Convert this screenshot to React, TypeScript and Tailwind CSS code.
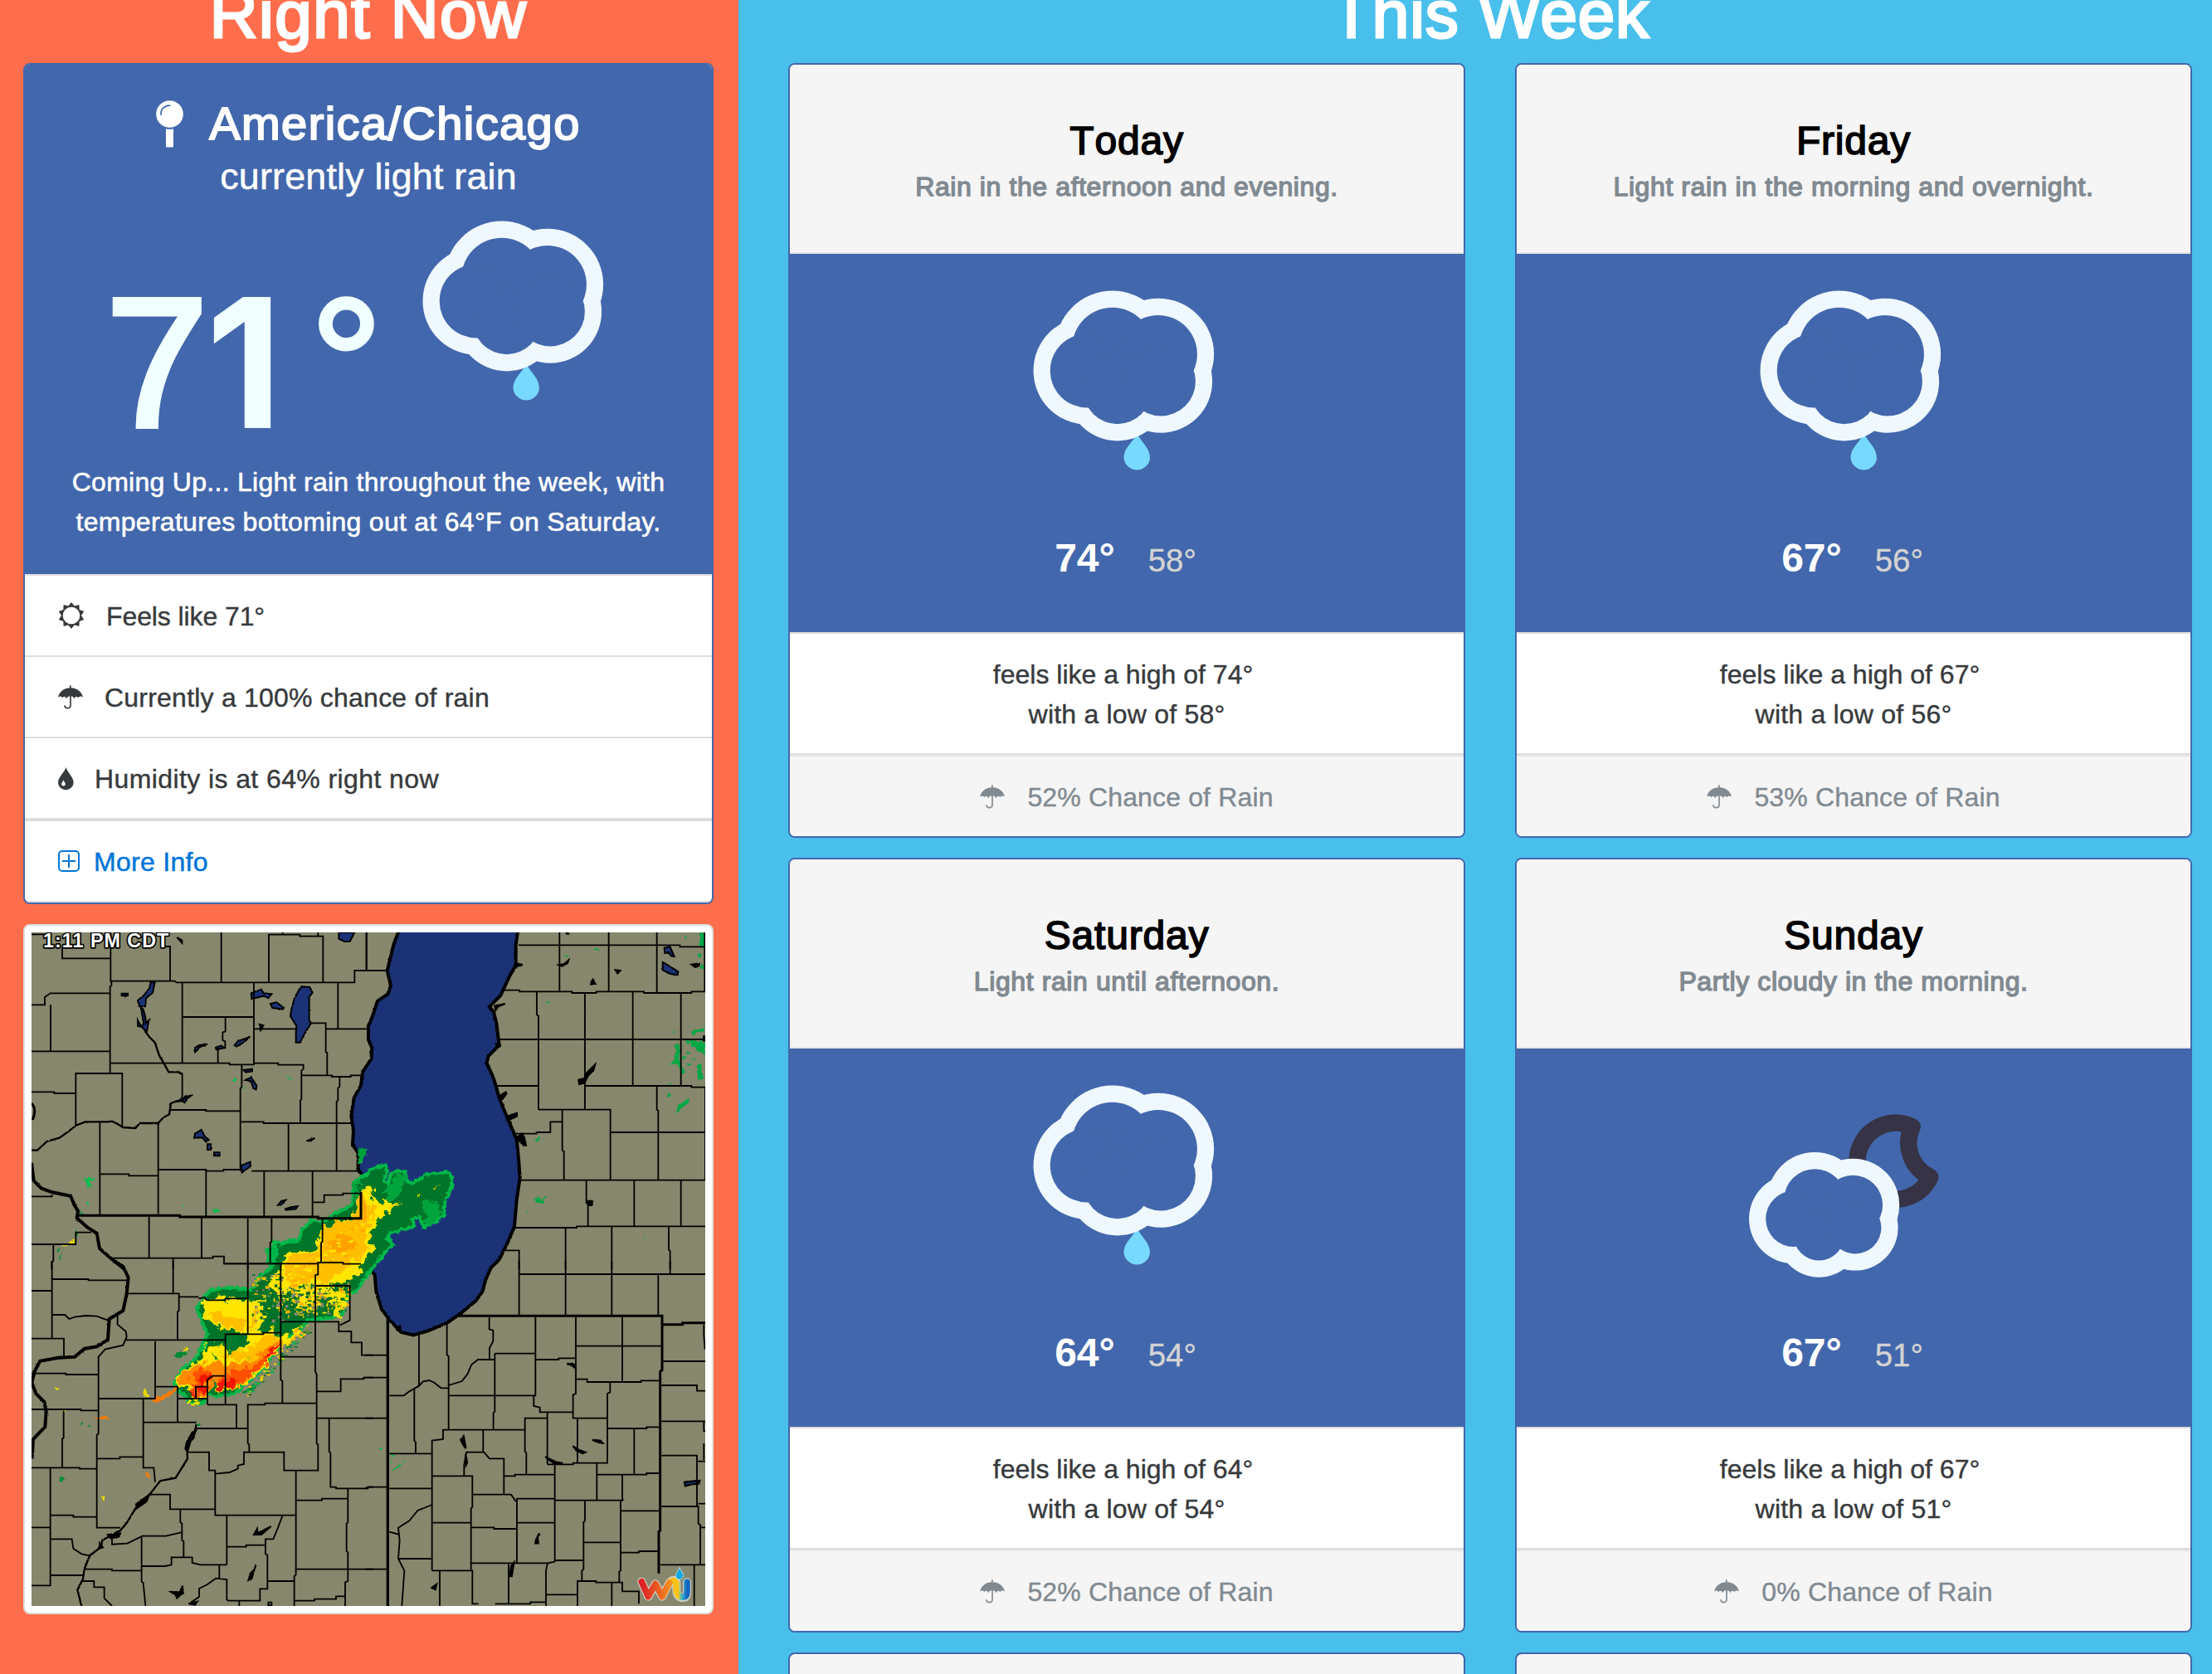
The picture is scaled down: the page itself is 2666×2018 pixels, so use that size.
import React from "react";

const CLOUD = [
  [95.2, 68.8, 68.8],
  [150.4, 76.4, 67.2],
  [64.8, 96.4, 64.8],
  [101.2, 119.9, 61],
  [153.6, 109.2, 62],
];

function Puffs({ x, y, k }: { x: number; y: number; k: number }) {
  return (
    <g transform={`translate(${x} ${y})`}>
      <g fill="#f0f8ff">
        {CLOUD.map(([cx, cy, r], i) => (
          <circle key={i} cx={cx * k} cy={cy * k} r={r * k} />
        ))}
      </g>
      <g fill="#4267ac">
        {CLOUD.map(([cx, cy, r], i) => (
          <circle key={i} cx={cx * k} cy={cy * k} r={r * k - 20.2} />
        ))}
      </g>
    </g>
  );
}

function RainCloud() {
  return (
    <svg viewBox="0 0 256 256" className="h-64 w-64 shrink-0">
      <path d="M140.500 192C144 202 156 209 156 222A15.800 15.800 0 0 1 124.500 222C124.500 209 137 202 140.500 192Z" fill="#78d9ff" />
      <Puffs x={15.5} y={20.5} k={1} />
    </svg>
  );
}

function CloudyNight() {
  return (
    <svg viewBox="0 0 256 256" className="h-64 w-64 shrink-0">
      <path
        transform="translate(-56 -48) scale(.333333)"
        d="M764 355A138 138 0 1 0 829 537A137 137 0 0 1 764 355Z"
        fill="none"
        stroke="#353345"
        strokeWidth="61"
        strokeLinejoin="round"
      />
      <Puffs x={2} y={101} k={0.833} />
    </svg>
  );
}

function Umbrella() {
  return (
    <svg viewBox="30 318 90 86" className="h-[29px] w-[30px] shrink-0" fill="currentColor">
      <path d="M72 318h5v9C100 328 116 342 120 361C114 357 107 357 103 363C98 357 93 357 89 366C86 360 82 357 77.500 357V390C77.500 399 72 403 65 403C57 403 51 398 51 390H56C56 395 60 398 65 398C70 398 72.500 395 72.500 390V357C68 357 63 360 60 366C56 357 51 357 46 363C42 357 36 357 30 361C34 342 50 328 72 327Z" />
    </svg>
  );
}

function Sun() {
  const pts: string[] = [];
  for (let i = 0; i < 20; i++) {
    const r = i % 2 ? 36 : 48;
    const a = (i * Math.PI) / 10;
    pts.push(`${50 + r * Math.sin(a)},${50 - r * Math.cos(a)}`);
  }
  return (
    <svg viewBox="2 2 96 96" className="h-8 w-8 shrink-0">
      <polygon points={pts.join(" ")} fill="#373a3c" />
      <circle cx="50" cy="50" r="31" fill="#fff" />
    </svg>
  );
}

function Drop() {
  return (
    <svg viewBox="30 610 56 80" className="h-[27px] w-[19px] shrink-0">
      <path d="M58 610C63 628 85 645 85 664A27 26 0 0 1 30 664C30 645 53 628 58 610Z" fill="#373a3c" />
      <path d="M49 655C51 661 56 665 56 670A7 7 0 0 1 42 670C42 665 47 661 49 655Z" fill="#fff" />
    </svg>
  );
}

function Plus() {
  return (
    <svg viewBox="0 0 26 26" className="h-[26px] w-[26px] shrink-0" fill="none" stroke="#0275d8" strokeWidth="2">
      <rect x="1" y="1" width="24" height="24" rx="4" />
      <path d="M13 5V21M5 13H21" />
    </svg>
  );
}

function Pin() {
  return (
    <svg viewBox="24 29 99 170" className="h-[57px] w-[33px] shrink-0">
      <circle cx="73.500" cy="78" r="49" fill="#fff" />
      <path d="M60 131Q73 134 87 131V194Q87 198 83 198H64Q60 198 60 194Z" fill="#fff" />
      <path d="M42 82Q40 49 76 47" fill="none" stroke="#4267ac" strokeWidth="5" />
    </svg>
  );
}

const RADAR_EDGE =
  "M1305-340L1335-345L1338-322L1328-290L1345-280L1350-310L1370-325L1390-326L1405-320L1408-295L1425-280L1445-290L1490-315L1530-318L1560-322L1575-300L1575-275L1560-240L1550-220L1545-165L1520-145L1470-122L1462-145L1455-160L1432-150L1438-130L1425-120L1380-110L1350-100L1340-80L1362-62L1335-35L1320-15L1300 10L1285 30L1250 75L1230 110L1200 120L1180 190L1150 205L1050 215L1030 250L980 280L950 310L920 350L880 400L820 450L790 480L720 490L690 480L680 510L650 518L620 508L615 490L580 470L572 440L600 390L650 350L670 300L690 265L670 220L650 170L680 130L700 105L780 95L850 105L880 55L920 25L915-10L905-40L935-50L930-70L960-60L985-75L1020-70L1030-110L1050-130L1070-150L1100-140L1150-170L1210-200L1220-280L1240-300L1270-315L1280-330Z";

function rand(seed: number) {
  let s = seed;
  return () => {
    s = (s * 16807) % 2147483647;
    return s / 2147483647;
  };
}

function Specks() {
  const r = rand(77);
  const out = [];
  for (let i = 0; i < 420; i++) {
    const t = r();
    const x = 850 + t * 350;
    const y = 215 - (t > 0.35 ? t * 40 : 0) - r() * (t > 0.3 ? 110 : 170);
    const w = 5 + Math.floor(r() * 3) * 5;
    const h = 5 + Math.floor(r() * 2) * 5;
    const c = ["#00702a", "#006626", "#86876c", "#ffe600", "#00702a", "#ffb400"][Math.floor(r() * 6)];
    out.push(<rect key={i} x={x} y={y} width={w} height={h} fill={c} />);
  }
  for (let i = 0; i < 110; i++) {
    const t = r();
    out.push(
      <rect
        key={"b" + i}
        x={830 + t * 230}
        y={460 - t * 220 + r() * 34 - t * 20}
        width={5 + r() * 9}
        height={5}
        fill={["#00b848", "#00702a", "#86876c", "#ffd000"][i % 4]}
      />
    );
  }
  for (let i = 0; i < 90; i++) {
    const a = r();
    out.push(
      <rect
        key={"c" + i}
        x={975 + a * 270}
        y={60 - a * 200 + (r() - 0.3) * 90}
        width={5 + r() * 14}
        height={5 + r() * 5}
        fill={["#ffc800", "#ffa800", "#ffe600"][i % 3]}
      />
    );
  }
  return <g>{out}</g>;
}

function RadarMap() {
  return (
    <svg viewBox="0 0 2436 2436" className="block h-[812px] w-[812px]">
      <defs>
        <filter id="rough" x="-5%" y="-5%" width="110%" height="110%">
          <feTurbulence type="fractalNoise" baseFrequency="0.07" numOctaves="3" seed="4" result="n" />
          <feDisplacementMap in="SourceGraphic" in2="n" scale="18" xChannelSelector="R" yChannelSelector="G" />
        </filter>
        <filter id="blotch" x="-5%" y="-5%" width="110%" height="110%">
          <feTurbulence type="fractalNoise" baseFrequency="0.035" numOctaves="4" seed="12" result="n" />
          <feDisplacementMap in="SourceGraphic" in2="n" scale="60" xChannelSelector="R" yChannelSelector="G" />
        </filter>
        <filter id="coast" x="-5%" y="-5%" width="110%" height="110%">
          <feTurbulence type="fractalNoise" baseFrequency="0.09" numOctaves="2" seed="9" result="n" />
          <feDisplacementMap in="SourceGraphic" in2="n" scale="6" xChannelSelector="R" yChannelSelector="G" />
        </filter>
        <linearGradient id="w" x1="0" x2="1">
          <stop offset="0" stopColor="#dc1f26" />
          <stop offset="1" stopColor="#f58a1f" />
        </linearGradient>
        <linearGradient id="u" x1="0" x2="1">
          <stop offset="0" stopColor="#fdb913" />
          <stop offset=".5" stopColor="#fdc516" />
          <stop offset=".7" stopColor="#3bb6c9" />
          <stop offset="1" stopColor="#1565c0" />
        </linearGradient>
      </defs>
      <rect width="2436" height="2436" fill="#86876c" />

      {/* Lake Michigan */}
      <g transform="translate(1206 -72)" filter="url(#coast)">
        <path
          d="M125 60L105 110L95 150L80 210L93 265L82 295L45 320L25 380L12 410L12 460L25 490L22 530L-8 575L-15 625L-40 670L-50 735L-42 790L-45 840L-25 870L-25 930L2 965L-10 1010L-14 1110L-25 1170L-20 1230L5 1280L35 1310L40 1370L60 1435L90 1475L130 1518L175 1528L230 1512L300 1482L345 1450L400 1405L425 1370L435 1330L455 1285L485 1255L515 1195L540 1135L548 1040L560 960L555 890L548 820L515 745L485 670L465 600L440 545L445 520L485 480L475 400L465 360L450 340L490 300L520 235L545 190L545 120L553 60Z"
          fill="#1a3276"
          stroke="#000"
          strokeWidth="12"
        />
        <path d="M540 180l30 5v8l-32 10zM485 660l25-15 5 10-15 22-15 3zM510 735l42-14v18l-30 15zM548 810l20-15 10 15 8 35h-14l-20-20zM470 470l22 5v12h-20zM465 335l40-8 3 6-25 10-12 18z" />
      </g>

      {/* inland lakes */}
      <g transform="translate(-54 -72)" fill="#1a3276" stroke="#000" strokeWidth="6" filter="url(#coast)">
        <path d="M1028 268L1060 270L1070 290L1058 305L1058 390L1065 400L1040 440L1025 470H1010V430L1012 410L990 375L995 345L1005 310Z" />
        <path d="M485 252H500L492 290L468 310L465 340H445L438 318L460 300L480 275Z" />
        <path d="M458 350L466 380L468 400L478 390L470 435L455 415L438 410V390L450 410L460 405L450 345Z" />
        <path d="M848 292L885 278L892 292L922 295L910 310L895 302L850 312ZM918 330L940 325L966 345L962 350L925 345Z" />
        <path d="M1165 72H1222L1205 105H1185L1165 95ZM645 800L668 786L682 812L695 822L685 830L672 814L642 815ZM690 838h12v20h-12zM714 868h20v12h-20zM812 915L845 902V918L815 940ZM720 488l20-6 12 8-30 6z" />
        <path d="M788 480L800 465L845 450L820 470L795 485ZM380 293h22v8h-22zM820 570l32-4v8l-24 4zM828 606l20-10 20 30-2 14-10-4-8-26zM575 683l25-5 10-14 22-2-18 14-6 12-8-6-24 2zM945 1058l12-14 15-4-14 18zM972 1072l20-6 24-4-6 10-36 4zM1112 1138l22-6-10 18-12-2zM1048 826l30-10-14 10zM580 90l18 10v10zM645 505V490L660 480L690 476L660 488L652 500ZM880 405l12 4-10 16z" />
      </g>
      <g transform="translate(1206 -72)" fill="#1a3276" stroke="#000" strokeWidth="6" filter="url(#coast)">
        <path d="M1082 128l20-5 16 36-12-2-8-14-14 4zM1076 180l12 6 44 28-2 12-26-4-28-14z" />
        <path fill="#000" d="M1180 188l28-4v8l-14 6zM905 208l18 2-10 10zM818 250l6-8 8 16-16 2zM700 190l20-4 16-14-4 12-20 10zM772 605l22-6 8-20 30-30-6 22-20 20-12 26-20 4zM805 1043h16v16h-14zM728 72h8v5h-8z" />
      </g>
      <g transform="translate(1206 1188)" fill="#1a3276" stroke="#000" strokeWidth="7" filter="url(#coast)">
        <path d="M1155 800L1190 796L1210 795L1206 806L1180 808L1158 814ZM652 708L670 718L690 728L715 732L685 734L660 716ZM752 670L770 682L796 692L786 696L764 686ZM730 372l26 2 4 14-14-12z" />
        <path fill="#000" d="M822 648l28 2 8 8-14-2zM356 634l4 20 4 24-12-18-6-14zM363 700l6 30-4 8zM630 985l-6 14 2 22h-10l2-12zM538 1092l-8 48h-6l4-36zM242 1182l16-12-4 18zM115 240l12-4v18l-12-6z" />
      </g>
      <g transform="translate(-54 1188)" stroke="#000" strokeWidth="6" filter="url(#coast)">
        <path d="M648 615L630 650L618 690L610 680L615 655L635 620ZM330 990L375 985L370 998L340 1003ZM300 1020l12 16-14 4zM432 880L480 845L470 870L435 895ZM858 990L870 968L872 985L920 960L885 990ZM865 1100L850 1150L838 1155L845 1130L860 1115ZM558 1197L590 1198L600 1175L602 1200L580 1220L575 1208ZM622 1240l30-8-6 12z" />
      </g>

      {/* precipitation */}
      <g transform="translate(-54 1188)" filter="url(#rough)">
        <path d={RADAR_EDGE} fill="#00752c" stroke="#00b848" strokeWidth="12" />
        <path d="M910-30L950-50L930 20L900 10ZM660 320L690 280L690 310L650 345Z" fill="#00b848" />
      </g>
      <g transform="translate(-54 1188)" filter="url(#blotch)">
        <path d="M1330-250L1370-310L1400-305L1400-270L1370-220L1340-210ZM1480-220L1530-210L1540-170L1490-135L1470-140L1480-190ZM1220-280L1240-300L1235-220L1215-200Z" fill="#00a43e" />
        <path d="M1255-270L1290-275L1280-230L1330-210L1378-210L1335-170L1300-140L1275-100L1295-40L1265 0L1240 40L1190 80L1110 90L1190 110L1170 200L1150 200L1140 150L1090 110L1080 200L1050 160L1030 200L990 110L960 160L940 120L900 80L935 60L960 20L975-25L1080-50L1105-120L1210-155L1240-220Z" fill="#ffe600" />
        <path d="M660 150L700 135L835 140L880 150L900 190L870 260L930 250L955 280L1040 235L1010 280L960 310L920 360L880 400L820 450L760 480L720 460L690 490L650 510L625 505L640 480L590 450L575 440L600 385L650 370L690 310L740 290L770 340L840 300L830 265L740 240L680 215Z" fill="#ffe600" />
        <path d="M760 270L810 270L790 320L760 345ZM800 350l30-8v16zM700 345l30-4-6 18zM700 440l36-10-10 50-20 4z" fill="#007a2e" />
        <path d="M1250-240L1300-190L1270-120L1265-40L1230 0L1120 75L1060 70L980 100L970 20L1000-20L1090-40L1110-120L1210-150ZM690 200L730 190L830 230L820 250L740 230ZM850 180L880 175L860 250L845 250ZM980 290L1040 240L1030 270L985 300ZM890 270L940 262L950 290L860 350L790 360L730 340L850 320Z" fill="#ffbe00" />
        <path d="M1130-70L1190-110L1225-60L1180-20L1140-30ZM1255-220L1275-180L1260-130L1250-160Z" fill="#ffa200" />
        <path d="M585 440L600 395L650 380L720 365L790 375L860 350L920 300L955 285L960 305L910 360L850 415L790 460L735 455L720 430L690 490L640 495L640 455Z" fill="#ff8a00" />
        <path d="M620 445L645 420L665 385L690 400L700 420L685 480L645 490L645 460ZM735 420L790 400L860 375L925 310L960 290L920 345L890 375L800 455L760 470L735 458Z" fill="#ff5000" />
        <path d="M735 440L760 425L795 430L790 455L760 470L735 463ZM900 345L925 315L950 298L950 310L915 345L905 370ZM655 430L690 405L690 475L660 475ZM635 475h14v18h-14z" fill="#f01400" />
      </g>
      <g transform="translate(-54 1188)" filter="url(#rough)">
        <path d="M490 500L520 490L560 470L575 450L580 470L550 492L520 508L495 512ZM280 566L310 562L340 570L310 575ZM465 768L480 770L484 785L470 780Z" fill="#ff7a00" />
        <path d="M455 480L465 465L480 488L465 492ZM600 325L615 310L620 330ZM308 852h10v12h-10zM162 540h16v6h-16zM140 460h12v8h-12zM625 515L670 508L660 520L635 524ZM1445-238l14-8-8 16zM1505-265l30-12-24 16zM1345-195l40-18-30 28zM160-55l30-12 22-14-6 16-30 14z" fill="#e8d800" />
        <path d="M565 345L585 330L620 330L632 325L610 342L575 352ZM155 785l14-6 4 16-18 2zM258 592l12 14-10-2zM232 586h8v6h-8zM650 588h12v6h-12zM820 470l80-50-40 46-38 16zM225-185l16 10-6 14zM215-130l4 40-6 8zM150-40l8-8-8 28zM155 0l14-50-10 30-8 12z" fill="#008a34" />
        <path d="M240-300h45v10h-22l10 20-16 8-4-22zM255-212h8v8h-8zM598-200l12-2-6 8zM675-178h20l-8 10zM706-188l34 4-20 8zM780-655l12-4-4 18zM820-630h6v5h-6zM905-698h10M972-670l10 6 14 2v4l-22-4zM1000-700l14 6z" fill="#00bf4b" />
        <path d="M1238-405l30-2-2 20-12 14-4 18-10 6-4-30z" fill="#00a43e" />
      </g>
      <g transform="translate(-54 1188)">
        <Specks />
      </g>
      <g transform="translate(1206 -72)" fill="#00a844" filter="url(#rough)">
        <path d="M1210 75L1228 72V135L1208 120ZM1172 432L1225 415V428L1190 442ZM1155 462L1230 470V515L1200 500L1185 485ZM1118 480L1135 475L1138 500L1132 530L1156 575L1145 585L1132 550L1100 552L1120 530L1126 500ZM1200 548L1215 545L1222 600L1208 605ZM1105 436l12-6 8 8zM1095 618h14v5h-14zM1125 728L1130 700L1165 675L1172 685L1140 712ZM1090 655h14v10h-14zM825 133h24v4h-24zM722 155h12v5h-12zM655 322h20l-14 8zM610 1035l20-6 6 16 24-26-14 28-24 4zM580 1078h12v5h-12zM612 828l20-18-6 14zM1008 1172h10v5h-10zM1212 190h14v14h-14zM1155 86h8v8h-8zM1160 560l16-20 4 8zM1150 520h10v8h-10zM1165 505h12v6h-12zM1185 530h8v8h-8zM1206 150h8v10h-8z" />
      </g>
      <g transform="translate(1206 1188)" fill="#00b848">
        <path d="M50 680l14-6-4 10zM95 702h10v5h-10zM92 725h6v5h-6zM98 758l30-24 4 4-30 22zM136 724h6v5h-6z" />
      </g>

      {/* county and state borders */}
      <g fill="none" stroke="#000" strokeWidth="5.5">
        <g transform="translate(-54 -72)">
          <path d="M54 79H100M165 125V166H338M340 72V248H572L578 253H1222V210H1290M343 248V265L338 268V582M530 123H555V248M740 72V253M912 253V80H1024V86H1108V253M962 72v8M1090 72v12M1265 72V210M338 292H122L102 306V334H54M123 334V502M54 502H338M599 253V545M599 378H858M858 253V545M755 378V430L745 434V462L754 466V490M728 490V545M338 545H770V550H858V545H946V551H1037V566L1030 572V675L1026 680V762M858 421H1012M1058 400H1118V505L1123 508V589M1162 253V421M1118 421H1270M1030 589H1140V594H1208V589H1250M1168 594V630L1162 635V680L1157 684V935M814 550V632L809 636V935M599 582V670M214 770V582H382V772M54 649H136V654H214M555 690V714H685V718H809M809 757H893V762H1215M983 762V935M512 757V1090M512 930H685V935H748V930H809M850 935H1235M685 935V1100M895 935V1100M1070 935V1098M1070 1048H1112V1022H1180V1016H1240M301 760V1092M301 946H406V952H512" />
          <path d="M54 1027H128V1020M54 1200H214V1157H270M133 1200V1260L127 1264V1290M479 1100V1248M669 1100V1248M836 1105V1290M922 1105V1190L917 1194V1270M345 1250H710V1244H750V1270H960M566 1250V1290M1106 1106V1190L1101 1195V1266M917 1270H1090V1266H1180V1271H1245" />
          <path d="M465 430L480 450L500 470L515 515L535 550L550 577H585L599 584M54 860H75L110 828L155 815L190 790L215 770L248 757H330L345 755L365 765L385 777L430 780L445 762H512L530 742L552 730L558 690L600 675L630 663" strokeWidth="7" filter="url(#coast)" />
          <path d="M54 905L62 970L90 998L130 1012L195 1025L210 1060L222 1080L218 1105L255 1138L290 1160L300 1215L340 1250L390 1290" strokeWidth="12" filter="url(#coast)" />
          <path d="M54 690q20 20 4 60" strokeWidth="9" />
          <path d="M218 1096H590V1101H1090V1106H1245V1010" strokeWidth="9" />
        </g>
        <g transform="translate(1206 -72)">
          <path d="M5 72V210M-35 210H80M555 118H1138V124H1228V286M703 72V286M881 72V286M1055 72V291M1228 72V124M500 281H558V286H748V291H836V286H1008V291H1180V286H1230M621 286V370L627 374V713M795 291V713M968 286V627M1142 291V627M485 459H1230M473 627H627M795 627H1180V632H1230V968M627 713H887V968M713 713V860L719 864V968M713 757H670V795H620V800H545M1055 627V713L1060 716V968M887 795H1228M562 968H1230M800 968V1050L806 1054V1135M973 968V1135M1142 968V1135M540 1140H765V1135H1230M725 1140V1290M892 1135V1290M1098 1135V1220L1103 1224V1290M505 1222H557V1290" />
          <path d="M1230 445v22" strokeWidth="18" />
        </g>
        <g transform="translate(-54 1188)">
          <path d="M128 0V281M128 66H260V70H398M54 108H128M128 195H175L190 210L210 203L250 198L290 200L330 215M54 281H171V347M400 118H587V130H658M587 130V180L582 184V286M390 286H755M566 0V118M658 136L680 132L688 142H755V136H836M836 0V265M750 10H955M755 265H892V260H955M755 265V518M690 520H795V606M648 606H836M365 190V230L395 255L398 275L385 305L320 320L296 347V625L290 630V712V965H375M54 407H178V411H296M54 537H232V541H293M170 541V640L165 644V748M54 748H228V752H290M290 715H373V709H458M501 290V498H296M501 455H582V583M458 498V748H496L501 800M458 584H650M582 498H690V520M836 606V520H898V515H1085M836 606V660L841 664V692M955 10V430L961 434V515M955 220H1165V255H1210V295H1248V341H1290M1080 50V400L1085 410V660L1090 665V758H967V692H822V735L800 740V752L770 765L718 770M1090 10V50H1080M1080 90H1205V215L1170 232M955 347H1080M1085 472H1172V427H1255V422H1290M1085 569H1290M1130 569V690L1135 694V818H1155V823H1270V818H1290M690 520V430L708 416H755M690 455H648V495" />
          <path d="M620 692H696V758H718V920H1010M485 845H555V898H718M592 898V945L598 950V1010L604 1014V1072M760 920V1099M760 1034H830V1028H900M962 920L945 965L928 1006H900V1060L907 1064V1158M1010 758V1135L1004 1140V1248M1010 866H1104V860H1198M1198 823V945L1193 950V1050L1198 1054V1158L1188 1162V1248M1010 1115H1290M1004 1158H907V1186H880V1229H765L760 1225V1152L720 1148L690 1170L660 1185V1215L630 1235M733 1099V1150M453 1104H537L560 1099V1072H635V1092L665 1099H760M345 1000V1025L400 1022L455 995H540L595 982M452 1000V1160L458 1164L466 1248M54 964H122M122 748V1174H54M122 920H205V926H290M122 1006H200L205 1040L235 1060L265 1066M245 1115H345V1120H452M122 1137H245M240 1158H280V1180H317V1220L345 1248M1004 1229H1077V1223H1155V1213H1188M805 1229V1248M910 1235h12v10h-12z" />
          <path d="M350 0L385 20L404 60L398 120L385 180L335 210L330 285L290 310L245 318L210 347L150 350L85 362L65 400L55 440L70 480L100 510L107 545L103 600L60 645L56 715" strokeWidth="12" filter="url(#coast)" />
          <path d="M650 590L640 640L615 665L618 715L575 785L520 795L485 840L430 895L400 945L375 975L310 1010L305 1035L265 1065L245 1115L240 1150L220 1190L235 1248" strokeWidth="7" filter="url(#coast)" />
        </g>
        <g transform="translate(1206 1188)">
          <path d="M195 265V450M296 225V340L302 345V611M449 203V247L463 252V290L450 315V356M0 341H80M0 422H80M0 569H80M88 487H140L160 472L195 452L210 436L232 432L250 440L275 460H302M302 450L350 435L370 410L385 375L408 357H469M469 335H616M469 335V545L464 550V611M616 203V487H302M616 357H700V352H762M762 203V480L752 484V569H875M930 203V438M762 308H1070M762 428H803V438H998V433H1065M886 438V475L876 480V731H768V569M610 487V525L632 530V547H752M659 547V736M578 611V569H659M578 569V690L583 694V773M302 611H578M302 611H282V645L242 650V1120M178 460V650L183 655V697M88 697H242M88 823H242M427 611V692M363 692H430L450 715H502V845M358 778V740L366 692M242 778H388V890L383 895V1120M388 845H528L545 870M502 778H542V773H686M549 1092V860H686M686 736V1088M659 736H752V731H768M838 731V866M838 773H1018V768H1065M973 606V773M876 606H1018V601H1065M930 773V866M686 866H930L924 870V1120L919 1124V1163M795 866V940L790 945V1115L784 1120V1158M790 1018H924M924 904H1065M924 1055H990V1050H1062M686 1083H788M383 1093H660L686 1088M383 964H466V969H549M242 947H383M549 947H686" />
          <path d="M242 882L190 903L160 940L120 965L125 1010L120 1077L142 1120L133 1248M120 1077H242M242 1120H388V1240H410M270 1120V1248M519 1093V1240M470 1240H598V1234H654M660 1093L654 1120V1248M654 1207H768M768 1248V1158H835V1163H930V1195H990V1240M892 1163V1248M1078 363H1230M1072 450H1200V470H1230M1072 580H1230M1072 704H1200V888M1072 888H1205V950L1212 955V1099M1068 1099H1230M1190 1099V1248M1200 725H1230M1205 878H1230M1212 964H1230M1225 230V270L1229 320M1225 580V615H1230M1225 660V720M557 0V195M725 0V195M892 0V195M557 48H1230M1103 0V48M1060 48V195M0 823L10 818H80M0 1115H82M88 980L125 990" />
          <path d="M82 210V1248" strokeWidth="10" />
          <path d="M335 199H1074V395L1067 400V975L1062 980V1130M1078 230H1148V224H1230" strokeWidth="9" />
        </g>
      </g>

      {/* Weather Underground mark */}
      <g transform="translate(1206 1188)" fill="none" strokeLinecap="round" strokeLinejoin="round">
        <path d="M1000 1160L1024 1214L1050 1168L1074 1214L1100 1165Q1116 1144 1126 1164V1195Q1130 1218 1150 1218Q1164 1218 1164 1195V1162" stroke="#fff" strokeOpacity=".6" strokeWidth="30" />
        <path d="M1100 1165Q1116 1148 1126 1166V1195Q1130 1216 1150 1216Q1164 1216 1164 1195V1162" stroke="url(#u)" strokeWidth="23" />
        <path d="M1000 1160L1024 1214L1050 1168L1074 1214L1100 1165" stroke="url(#w)" strokeWidth="23" />
        <path d="M1137 1110C1142 1122 1151 1130 1151 1138A14 14 0 0 1 1123 1138C1123 1130 1132 1122 1137 1110Z" fill="#0aa7e0" stroke="#fff" strokeOpacity=".6" strokeWidth="3" />
      </g>

      <text x="42" y="53" fontFamily="Liberation Sans" fontWeight="700" fontSize="70" textLength="454" fill="#fff" stroke="#000" strokeWidth="10" paintOrder="stroke" strokeLinejoin="round">
        1:11 PM CDT
      </text>
    </svg>
  );
}

type Day = { name: string; summary: string; hi: string; lo: string; rain: string; night?: boolean };

const DAYS: Day[] = [
  { name: "Today", summary: "Rain in the afternoon and evening.", hi: "74°", lo: "58°", rain: "52%" },
  { name: "Friday", summary: "Light rain in the morning and overnight.", hi: "67°", lo: "56°", rain: "53%" },
  { name: "Saturday", summary: "Light rain until afternoon.", hi: "64°", lo: "54°", rain: "52%" },
  { name: "Sunday", summary: "Partly cloudy in the morning.", hi: "67°", lo: "51°", rain: "0%", night: true },
];

function DayCard({ d }: { d: Day }) {
  return (
    <article className="flex h-[934px] w-[816px] flex-col overflow-hidden rounded-lg border-2 border-[#4267ac] bg-white text-center">
      <header className="h-[228px] border-b-2 border-[#e5e5e5] bg-[#f5f5f5] pt-[65px]">
        <h4 className="text-[48px] leading-[53px] tracking-[0.8px] text-black [-webkit-text-stroke:1.6px_#000] [font-kerning:none]">{d.name}</h4>
        <p className="mt-[11px] text-[32px] leading-[36px] tracking-[0.6px] text-[#818a91] [-webkit-text-stroke:1.4px_#818a91]">{d.summary}</p>
      </header>
      <div className="flex h-[456px] flex-col items-center bg-[#4267ac] pt-6">
        {d.night ? <CloudyNight /> : <RainCloud />}
        <div className="mr-[3px] mt-[58px] flex items-baseline gap-[40px] leading-[58px]">
          <span className="text-[48px] font-bold text-white">{d.hi}</span>
          <span className="text-[38.4px] text-[#d3d3d3] [-webkit-text-stroke:0.4px_#d3d3d3]">{d.lo}</span>
        </div>
      </div>
      <div className="h-[148px] border-y-2 border-[#ddd] pt-[25px] text-[32px] leading-[48px] text-[#373a3c] [-webkit-text-stroke:0.4px_#373a3c]">
        <p className="pr-[9px]">feels like a high of {d.hi}</p>
        <p className="tracking-[0.2px]">with a low of {d.lo}</p>
      </div>
      <footer className="flex h-[98px] items-center justify-center gap-[27px] border-t-2 border-[#e5e5e5] bg-[#f5f5f5] text-[32px] leading-[48px] text-[#818a91]">
        <Umbrella />
        <span className="mt-[2px] tracking-[0.15px] [-webkit-text-stroke:0.4px_#818a91]">{d.rain} Chance of Rain</span>
      </footer>
    </article>
  );
}

export default function App() {
  return (
    <main className="flex h-[2018px] w-[2666px] overflow-hidden font-['Liberation_Sans',Arial,sans-serif]">
      <section className="w-[890px] shrink-0 bg-[#ff6e4c] pl-7">
        <h1 className="-mt-[26px] mb-[14px] w-[832px] text-center text-[80px] leading-[88px] tracking-[1.5px] text-white [-webkit-text-stroke:3px_#fff]">Right Now</h1>
        <article className="w-[832px] overflow-hidden rounded-lg border-2 border-[#4267ac] bg-white">
          <header className="h-[614px] bg-[#4267ac] pt-10 text-center text-white">
            <h3 className="flex items-center justify-center gap-[31px] text-[56px] leading-[62px] tracking-[1.4px] [-webkit-text-stroke:2px_#fff]">
              <Pin />
              <span>America/Chicago</span>
            </h3>
            <p className="mt-[7px] text-[44.8px] leading-[50px] tracking-[0.2px] [-webkit-text-stroke:0.5px_#fff]">currently light rain</p>
            <div className="flex h-[320px] items-start pl-[98px] pt-[9px]">
              <div className="mt-[79px] flex w-[366px] shrink-0 text-[220px] leading-[226px] text-[#f0ffff] [-webkit-text-stroke:7px_#f0ffff]">
                <span>7</span>
                <span className="font-['Inter'] text-[211px] font-semibold [-webkit-text-stroke:4px_#f0ffff]">1</span>
                <span className="ml-[34px] [-webkit-text-stroke:5px_#f0ffff]">°</span>
              </div>
              <RainCloud />
            </div>
            <p className="text-[32px] leading-[48px] tracking-[0.28px] [-webkit-text-stroke:0.6px_#fff]">
              Coming Up... Light rain throughout the week, with
              <br />
              temperatures bottoming out at 64°F on Saturday.
            </p>
          </header>
          <ul className="text-[32px] leading-[48px] text-[#373a3c]">
            <li className="flex h-[98px] items-center gap-[26px] border-t-2 border-[#ddd] pl-10">
              <Sun />
              <span className="mt-[2px] tracking-[-0.1px] [-webkit-text-stroke:0.4px_#373a3c]">Feels like 71°</span>
            </li>
            <li className="flex h-[98px] items-center gap-[26px] border-t-2 border-[#ddd] pl-10">
              <Umbrella />
              <span className="mt-[2px] tracking-[0.22px] [-webkit-text-stroke:0.4px_#373a3c]">Currently a 100% chance of rain</span>
            </li>
            <li className="flex h-[98px] items-center gap-[25px] border-t-2 border-[#ddd] pl-10">
              <Drop />
              <span className="mt-[2px] tracking-[0.4px] [-webkit-text-stroke:0.4px_#373a3c]">Humidity is at 64% right now</span>
            </li>
            <li className="flex h-[102px] items-center gap-[17px] border-b-2 border-t-4 border-[#ddd] pl-10 text-[#0275d8]">
              <Plus />
              <span className="mt-[2px] tracking-[0.3px] [-webkit-text-stroke:0.5px_#0275d8]">More Info</span>
            </li>
          </ul>
        </article>
        <figure className="mt-6 h-[832px] w-[832px] rounded-lg border-2 border-[#ddd] bg-white p-2">
          <RadarMap />
        </figure>
      </section>
      <section className="grow bg-[#49bfeb] pl-[60px]">
        <h1 className="-mt-[26px] mb-[14px] w-[1692px] text-center text-[80px] leading-[88px] tracking-[0.8px] text-white [-webkit-text-stroke:3px_#fff]">This Week</h1>
        <div className="grid w-[1692px] grid-cols-2 gap-x-[60px] gap-y-6">
          {DAYS.map((d) => (
            <DayCard key={d.name} d={d} />
          ))}
          <div className="h-[934px] w-[816px] rounded-lg border-2 border-[#4267ac] bg-[#f5f5f5]" />
          <div className="h-[934px] w-[816px] rounded-lg border-2 border-[#4267ac] bg-[#f5f5f5]" />
        </div>
      </section>
    </main>
  );
}
